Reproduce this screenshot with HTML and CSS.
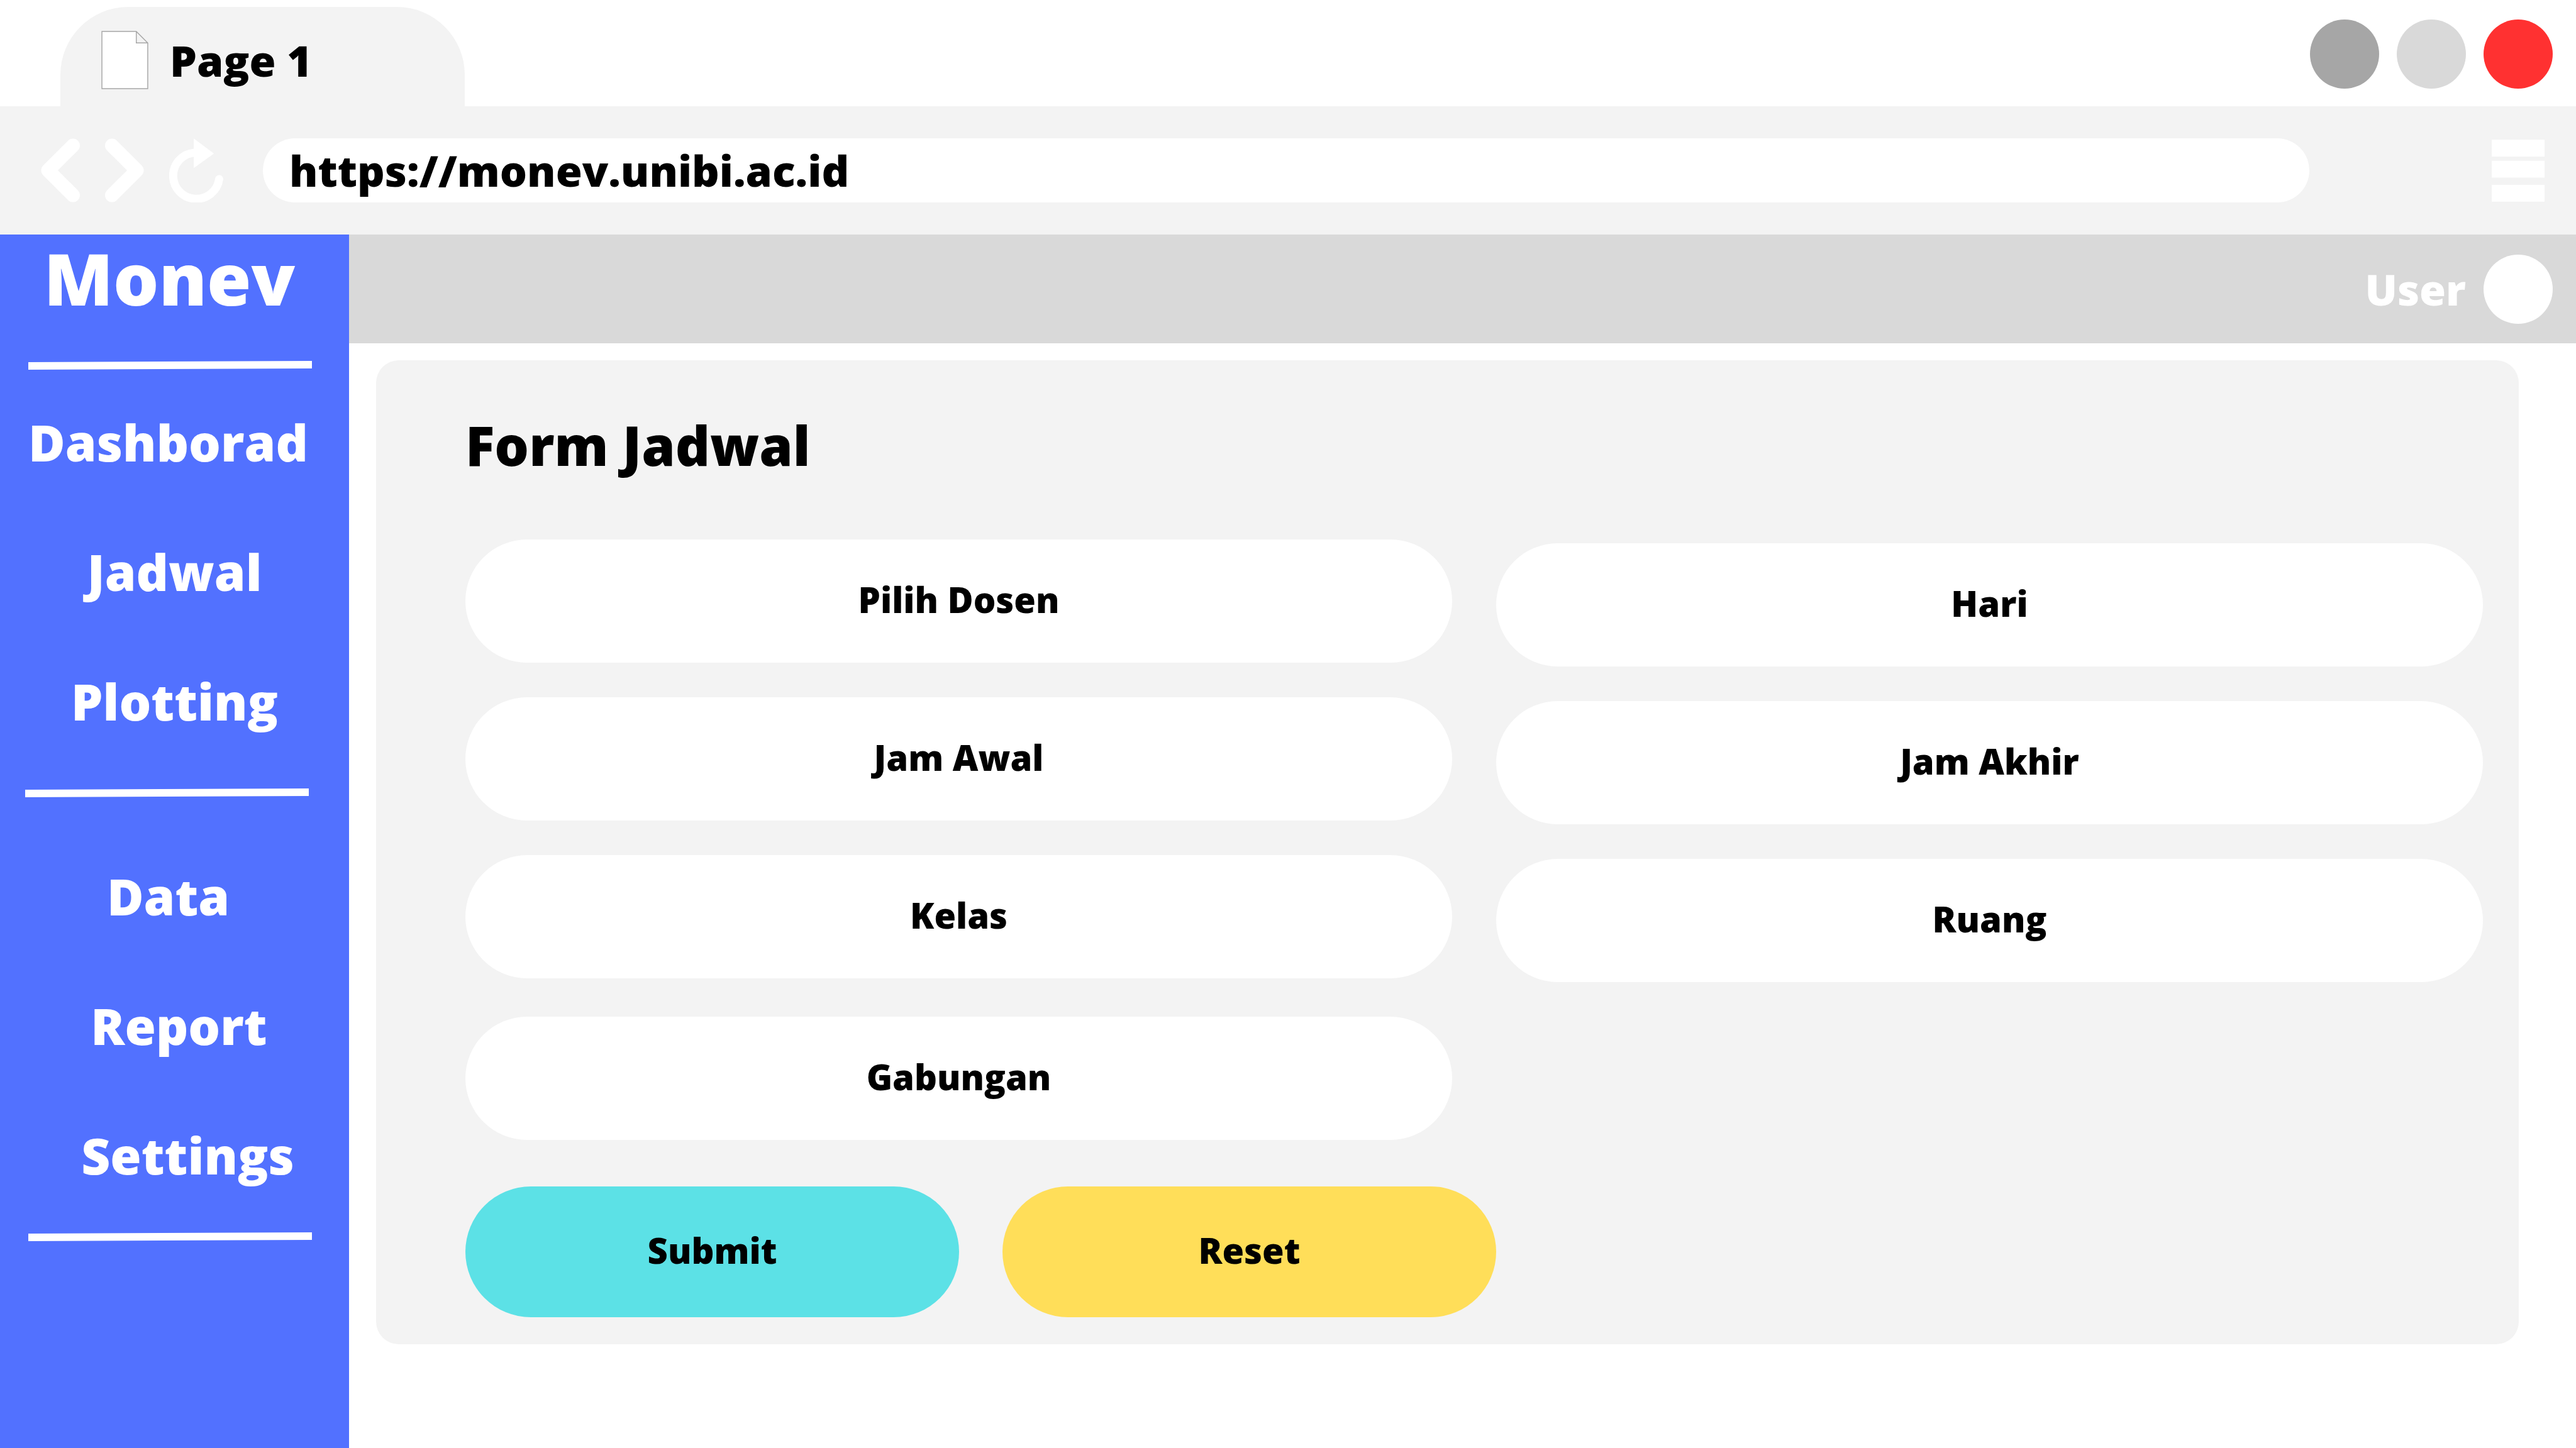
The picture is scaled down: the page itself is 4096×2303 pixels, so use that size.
FILE: index.html
```html
<!DOCTYPE html>
<html lang="id">
<head>
<meta charset="utf-8">
<meta name="viewport" content="width=device-width, initial-scale=1">
<title>Monev - Form Jadwal</title>
<link rel="stylesheet" href="styles.css">
</head>
<body>
<header class="browser">
  <div class="tab-strip">
    <div class="tab">
      <svg class="tab-icon" viewBox="0 0 78 97" aria-hidden="true">
        <path d="M1 1H58L77 20V96H1Z M58 1V20H77" fill="#fff" stroke="#a6a6a6" stroke-width="1.5"/>
      </svg>
      <span>Page 1</span>
    </div>
    <div class="window-buttons">
      <button class="dot dot-minimize" type="button" aria-label="Minimize"></button>
      <button class="dot dot-maximize" type="button" aria-label="Maximize"></button>
      <button class="dot dot-close" type="button" aria-label="Close"></button>
    </div>
  </div>
  <div class="toolbar">
    <div class="nav-buttons">
      <button class="icon-button" type="button" aria-label="Back">
        <svg class="icon-arrow" viewBox="0 0 65 106"><path d="M53.5 11.5L12 53L53.5 94.5" fill="none" stroke="#fff" stroke-width="23" stroke-linecap="round" stroke-linejoin="round"/></svg>
      </button>
      <button class="icon-button" type="button" aria-label="Forward">
        <svg class="icon-arrow" viewBox="0 0 65 106"><path d="M11.5 11.5L53 53L11.5 94.5" fill="none" stroke="#fff" stroke-width="23" stroke-linecap="round" stroke-linejoin="round"/></svg>
      </button>
      <button class="icon-button" type="button" aria-label="Reload">
        <svg class="icon-reload" viewBox="0 0 90 106"><path d="M83.2 67.5A38.5 38.5 0 1 1 42 23.5" fill="none" stroke="#fff" stroke-width="13.5" stroke-linecap="round"/><path d="M41 0L74.5 25L41 49Z" fill="#fff"/></svg>
      </button>
    </div>
    <input class="address" type="text" aria-label="Address" value="https://monev.unibi.ac.id">
    <button class="icon-button" type="button" aria-label="Menu">
      <svg class="icon-menu" viewBox="0 0 88 106"><path d="M0 2H88V30H0Z M0 37H88V65H0Z M0 77H88V105H0Z" fill="#fff"/></svg>
    </button>
  </div>
</header>

<div class="app">
  <aside class="sidebar">
    <div class="brand">Monev</div>
    <hr class="divider">
    <nav class="menu menu-main">
      <a href="#">Dashborad</a>
      <a class="indent" href="#">Jadwal</a>
      <a class="indent" href="#">Plotting</a>
    </nav>
    <hr class="divider divider-inner">
    <nav class="menu menu-data">
      <a href="#">Data</a>
      <a class="indent-wide" href="#">Report</a>
      <a class="indent-deep" href="#">Settings</a>
    </nav>
    <hr class="divider">
  </aside>

  <div class="content">
    <div class="topbar">
      <span>User</span>
      <span class="avatar"></span>
    </div>
    <main class="main">
      <form class="card">
        <h1 class="title">Form Jadwal</h1>
        <div class="columns">
          <div class="column">
            <select class="field" aria-label="Pilih Dosen"><option>Pilih Dosen</option></select>
            <input class="field" type="text" aria-label="Jam Awal" placeholder="Jam Awal">
            <input class="field" type="text" aria-label="Kelas" placeholder="Kelas">
            <input class="field field-last" type="text" aria-label="Gabungan" placeholder="Gabungan">
          </div>
          <div class="column column-right">
            <input class="field" type="text" aria-label="Hari" placeholder="Hari">
            <input class="field" type="text" aria-label="Jam Akhir" placeholder="Jam Akhir">
            <input class="field" type="text" aria-label="Ruang" placeholder="Ruang">
          </div>
        </div>
        <div class="actions">
          <button class="action action-submit" type="submit">Submit</button>
          <button class="action action-reset" type="reset">Reset</button>
        </div>
      </form>
    </main>
  </div>
</div>
</body>
</html>
```

FILE: styles.css
```css
* {
  box-sizing: border-box;
}

body {
  margin: 0;
  min-height: 100vh;
  display: flex;
  flex-direction: column;
  background: #fff;
  color: #000;
  font-family: "Open Sans", "Noto Sans", sans-serif;
  font-weight: 800;
  font-size: 68px;
}

button,
input,
select {
  margin: 0;
  padding: 0;
  border: 0;
  font: inherit;
  color: inherit;
}

svg {
  display: block;
}

/* Browser frame */

.tab-strip {
  display: flex;
  justify-content: space-between;
  height: 169px;
  padding: 11px 37px 0 96px;
}

.tab {
  display: flex;
  align-items: center;
  gap: 34px;
  width: 643px;
  padding: 10px 65px 0;
  border-radius: 108px 108px 0 0;
  background: #f3f3f3;
}

.tab-icon {
  width: 75px;
  height: 93px;
}

.window-buttons {
  display: flex;
  gap: 28px;
  padding-top: 20px;
}

.dot {
  width: 110px;
  height: 110px;
  border-radius: 50%;
}

.dot-minimize {
  background: #a6a6a6;
}

.dot-maximize {
  background: #d9d9d9;
}

.dot-close {
  background: #ff3131;
}

.toolbar {
  display: flex;
  align-items: center;
  height: 204px;
  padding: 0 50px 0 65px;
  background: #f3f3f3;
}

.nav-buttons {
  display: flex;
  gap: 40px;
}

.icon-button {
  background: none;
}

.icon-arrow {
  width: 62px;
  height: 102px;
}

.icon-reload {
  width: 86px;
  height: 102px;
}

.icon-menu {
  width: 84px;
  height: 102px;
}

.address {
  flex: 1;
  min-width: 0;
  height: 102px;
  margin: 0 290px 0 63px;
  padding: 0 42px 2px;
  border-radius: 51px;
  background: #fff;
}

/* Application */

.app {
  flex: 1;
  display: flex;
}

.sidebar {
  flex: none;
  width: 555px;
  background: #5271ff;
  color: #fff;
}

.brand {
  padding-right: 16px;
  font-size: 114px;
  line-height: 138px;
  text-align: center;
}

.divider {
  width: 451px;
  height: 14px;
  margin: 0 0 0 45px;
  border: 0;
  background: #fff;
  clip-path: polygon(0 2px, 100% 0, 100% 12px, 0 100%);
}

.divider-inner {
  margin-left: 40px;
}

.brand + .divider {
  margin-top: 63px;
}

.menu {
  display: flex;
  flex-direction: column;
  gap: 96px;
  font-size: 80px;
  line-height: 110px;
  text-align: center;
}

.menu-main {
  padding: 60px 20px 84px 0;
}

.menu-data {
  padding: 102px 20px 68px 0;
}

.menu a {
  color: inherit;
  text-decoration: none;
}

.menu .indent {
  padding-left: 20px;
}

.menu .indent-wide {
  padding-left: 34px;
}

.menu .indent-deep {
  padding-left: 62px;
}

.content {
  flex: 1;
  min-width: 0;
}

.topbar {
  display: flex;
  align-items: center;
  justify-content: flex-end;
  gap: 28px;
  height: 173px;
  padding-right: 37px;
  background: #d9d9d9;
  color: #fff;
}

.avatar {
  width: 110px;
  height: 110px;
  border-radius: 50%;
  background: #fff;
}

.main {
  padding: 27px 91px 0 43px;
}

.card {
  padding: 76px 57px 43px 142px;
  border-radius: 36px;
  background: #f3f3f3;
}

.title {
  margin: 0 0 91px;
  font-size: 86px;
  font-weight: 800;
  line-height: 118px;
}

.columns {
  display: flex;
  gap: 70px;
}

.column {
  flex: 1;
  min-width: 0;
  display: flex;
  flex-direction: column;
  gap: 55px;
}

.column-right {
  padding-top: 6px;
}

.field {
  width: 100%;
  height: 196px;
  padding: 0 40px 6px;
  border-radius: 98px;
  background: #fff;
  font-size: 56px;
  text-align: center;
  appearance: none;
}

.field::placeholder {
  color: #000;
  opacity: 1;
}

.field-last {
  margin-top: 6px;
}

.actions {
  display: flex;
  gap: 69px;
  margin-top: 74px;
}

.action {
  flex: 0 1 785px;
  height: 208px;
  padding-bottom: 6px;
  border-radius: 104px;
  font-size: 56px;
}

.action-submit {
  background: #5ce1e6;
}

.action-reset {
  background: #ffde59;
}
```
